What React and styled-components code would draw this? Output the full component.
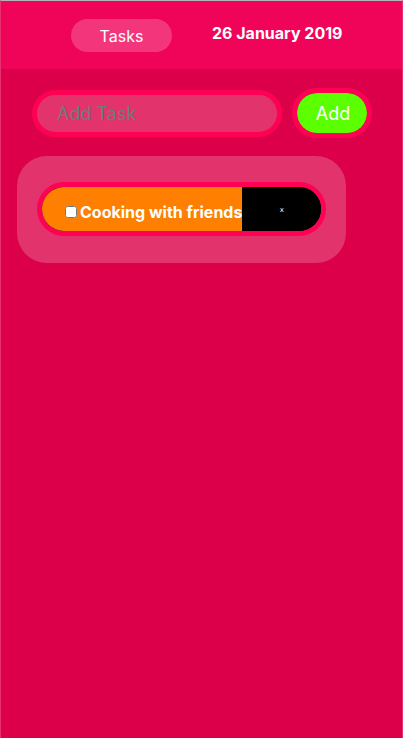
import React from "react";
import styled, { createGlobalStyle } from "styled-components";

const Global = createGlobalStyle`
  html, body { margin: 0; padding: 0; }
  body {
    background: #DB0049;
    font-family: Inter, "Noto Sans", "Liberation Sans", sans-serif;
  }
  * { box-sizing: border-box; }
`;

const Page = styled.div`
  min-height: 100vh;
  background: #DB0049;
  border-top: 1px solid #b4b4b4;
  border-left: 1px solid #e8306c;
  border-right: 1px solid #e8306c;
  display: flex;
  flex-direction: column;
`;

const Header = styled.header`
  height: 68px;
  background: #F0045A;
  display: flex;
  align-items: center;
  padding-left: 70px;
  gap: 40px;
`;

const NavPill = styled.div`
  width: 101px;
  height: 33px;
  border-radius: 17px;
  background: rgba(255, 255, 255, 0.2);
  color: #fff;
  font-size: 16px;
  display: flex;
  align-items: center;
  justify-content: center;
  padding-top: 2px;
`;

const DateLabel = styled.div`
  color: #fff;
  font-weight: 700;
  font-size: 16px;
  margin-bottom: 4px;
`;

const FormRow = styled.form`
  display: flex;
  align-items: center;
  gap: 10px;
  margin: 19px 0 0 31px;
`;

const TaskInput = styled.input`
  width: 250px;
  height: 47px;
  border: 5px solid #FF0055;
  border-radius: 24px;
  background: rgba(255, 255, 255, 0.2);
  padding: 0 0 0 20px;
  font-family: inherit;
  font-size: 18px;
  color: #fff;
  outline: none;
  &::placeholder { color: #6f7a79; }
`;

const AddButton = styled.button`
  width: 80px;
  height: 50px;
  border: 5px solid #FF0055;
  border-radius: 25px;
  background: #5CFF00;
  background-clip: padding-box;
  color: #fff;
  font-family: inherit;
  font-size: 18px;
  padding: 0 0 0 2px;
`;

const Card = styled.section`
  width: 329px;
  margin: 18px 0 0 16px;
  padding: 26px 20px 27px;
  border-radius: 30px;
  background: rgba(255, 255, 255, 0.2);
`;

const TaskItem = styled.div`
  width: 289px;
  height: 54px;
  border: 5px solid #FF0055;
  border-radius: 27px;
  overflow: hidden;
  display: flex;
  background: #000;
`;

const TaskBody = styled.label`
  flex: 1;
  background: #FF8000;
  display: flex;
  align-items: center;
  padding: 5px 0 0 23px;
  color: #fff;
  font-weight: 700;
  font-size: 16px;
  white-space: nowrap;
`;

const Check = styled.input`
  width: 12px;
  height: 12px;
  margin: 0 3px 0 0;
`;

const DeleteBox = styled.button`
  width: 80px;
  border: none;
  background: #000;
  color: #fff;
  font-family: "DejaVu Sans", sans-serif;
  font-size: 7px;
  padding: 2px 0 0;
  display: flex;
  align-items: center;
  justify-content: center;
`;

export default function App() {
  return (
    <>
      <Global />
      <Page>
        <Header>
          <NavPill>Tasks</NavPill>
          <DateLabel>26 January 2019</DateLabel>
        </Header>
        <FormRow onSubmit={(e) => e.preventDefault()}>
          <TaskInput placeholder="Add Task" />
          <AddButton type="submit">Add</AddButton>
        </FormRow>
        <Card>
          <TaskItem>
            <TaskBody>
              <Check type="checkbox" />
              Cooking with friends
            </TaskBody>
            <DeleteBox>x</DeleteBox>
          </TaskItem>
        </Card>
      </Page>
    </>
  );
}
